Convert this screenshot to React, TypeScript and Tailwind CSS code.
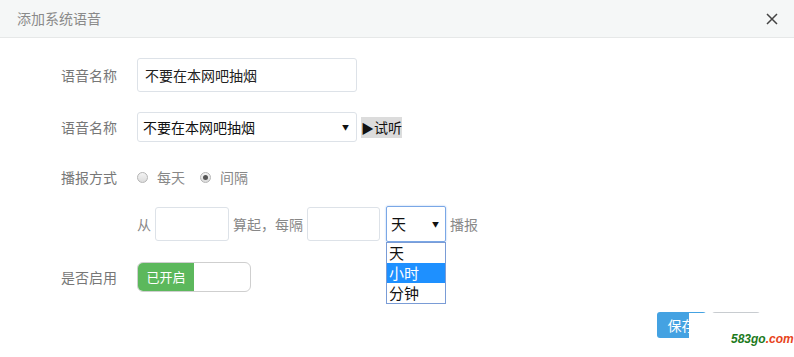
import { FunctionComponent } from "react";

const font = { fontFamily: '"Noto Sans CJK SC", "Noto Sans", sans-serif' };

const Label: FunctionComponent<{ text: string }> = ({ text }) => (
  <div className="w-[117px] shrink-0 text-right text-[14px] text-[#777]">{text}</div>
);

const Radio: FunctionComponent<{ checked?: boolean }> = ({ checked }) => (
  <span className="w-[11px] h-[11px] rounded-full border border-[#b5b5b5] bg-gradient-to-b from-[#f4f4f4] to-[#dcdcdc] flex items-center justify-center">
    {checked && <span className="w-[5px] h-[5px] rounded-full bg-[#555]" />}
  </span>
);

const App: FunctionComponent = () => {
  return (
    <div className="relative w-[794px] h-[357px] bg-white overflow-hidden" style={font}>
      {/* Header */}
      <div className="h-[38px] bg-[#f5f7f7] border-b border-[#e6e8e8] flex items-center justify-between pl-[17px] pr-[16px]">
        <span className="text-[14px] text-[#8a8a8a]">添加系统语音</span>
        <svg width="12" height="12" viewBox="0 0 12 12" className="mt-[1px]">
          <path d="M1 1 L11 11 M11 1 L1 11" stroke="#444" strokeWidth="1.5" />
        </svg>
      </div>

      {/* Body */}
      <div className="flex flex-col pt-[20px]">
        <div className="flex items-center gap-5 h-[34px]">
          <Label text="语音名称" />
          <div className="w-[220px] h-[34px] border border-[#dde2e8] rounded-[3px] flex items-center px-[7px] text-[14px] text-[#222]">
            不要在本网吧抽烟
          </div>
        </div>

        <div className="flex items-center gap-5 h-[30px] mt-[20px]">
          <Label text="语音名称" />
          <div className="flex items-center gap-[4px]">
            <div className="w-[220px] h-[30px] border border-[#dde2e8] rounded-[3px] flex items-center justify-between pl-[5px] pr-[7px] text-[14px] text-[#111]">
              <span>不要在本网吧抽烟</span>
              <span className="text-[7px] text-[#111]">▼</span>
            </div>
            <span className="bg-[#dcdcdc] text-[14px] text-[#111] h-[21px] leading-[21px] flex items-center">
              <span className="text-[13px]">▶</span>
              <span>试听</span>
            </span>
          </div>
        </div>

        <div className="flex items-center gap-5 h-[20px] mt-[25px]">
          <Label text="播报方式" />
          <div className="flex items-center text-[14px] text-[#888]">
            <Radio />
            <span className="ml-[9px]">每天</span>
            <span className="ml-[15px]"><Radio checked /></span>
            <span className="ml-[9px]">间隔</span>
          </div>
        </div>

        <div className="flex items-center h-[34px] mt-[20px] pl-[137px] text-[14px] text-[#888]">
          <span>从</span>
          <div className="w-[74px] h-[34px] border border-[#dde2e8] rounded-[3px] ml-[4px]" />
          <span className="ml-[4px]">算起，每隔</span>
          <div className="w-[73px] h-[34px] border border-[#dde2e8] rounded-[3px] ml-[4px]" />
          <div className="relative ml-[6px]">
            <div className="w-[60px] h-[36px] border border-[#7aa7e6] rounded-[2px] flex items-center justify-between pl-[4px] pr-[6px] text-[15px] text-[#111] shadow-[0_0_2px_#9fc2f0]">
              <span>天</span>
              <span className="text-[7px]">▼</span>
            </div>
            <div className="absolute left-0 top-[36px] w-[60px] border border-[#7a9cd6] bg-white text-[15px] text-[#111] z-10">
              <div className="h-[20px] leading-[20px] pl-[2px]">天</div>
              <div className="h-[20px] leading-[20px] pl-[2px] bg-[#1e90ff] text-white">小时</div>
              <div className="h-[20px] leading-[20px] pl-[2px]">分钟</div>
            </div>
          </div>
          <span className="ml-[4px]">播报</span>
        </div>

        <div className="flex items-center gap-5 h-[30px] mt-[21px]">
          <Label text="是否启用" />
          <div className="w-[114px] h-[30px] border border-[#cfcfcf] rounded-[6px] overflow-hidden flex">
            <div className="w-[56px] h-full bg-[#5cb85c] text-white text-[13px] flex items-center justify-center">已开启</div>
          </div>
        </div>

        {/* Footer */}
        <div className="flex justify-end gap-[6px] mt-[20px] pr-[34px]">
          <div className="w-[49px] h-[26px] bg-[#44a2e2] rounded-[3px] text-white text-[14px] flex items-center justify-center">保存</div>
          <div className="w-[48px] h-[26px] border-t border-[#c8ccd0] rounded-[3px]" />
        </div>
      </div>

      {/* watermark overlay */}
      <div className="absolute left-[689px] top-[313px] w-[80px] h-[26px] bg-white" />
      <div className="absolute left-[731px] top-[331px] text-[12px] leading-[16px] italic font-bold" style={{ fontFamily: '"Liberation Sans", sans-serif' }}>
        <span className="text-[#1c7a1c]">583go</span>
        <span className="text-[#e8431a]">.com</span>
      </div>
    </div>
  );
};

export default App;
